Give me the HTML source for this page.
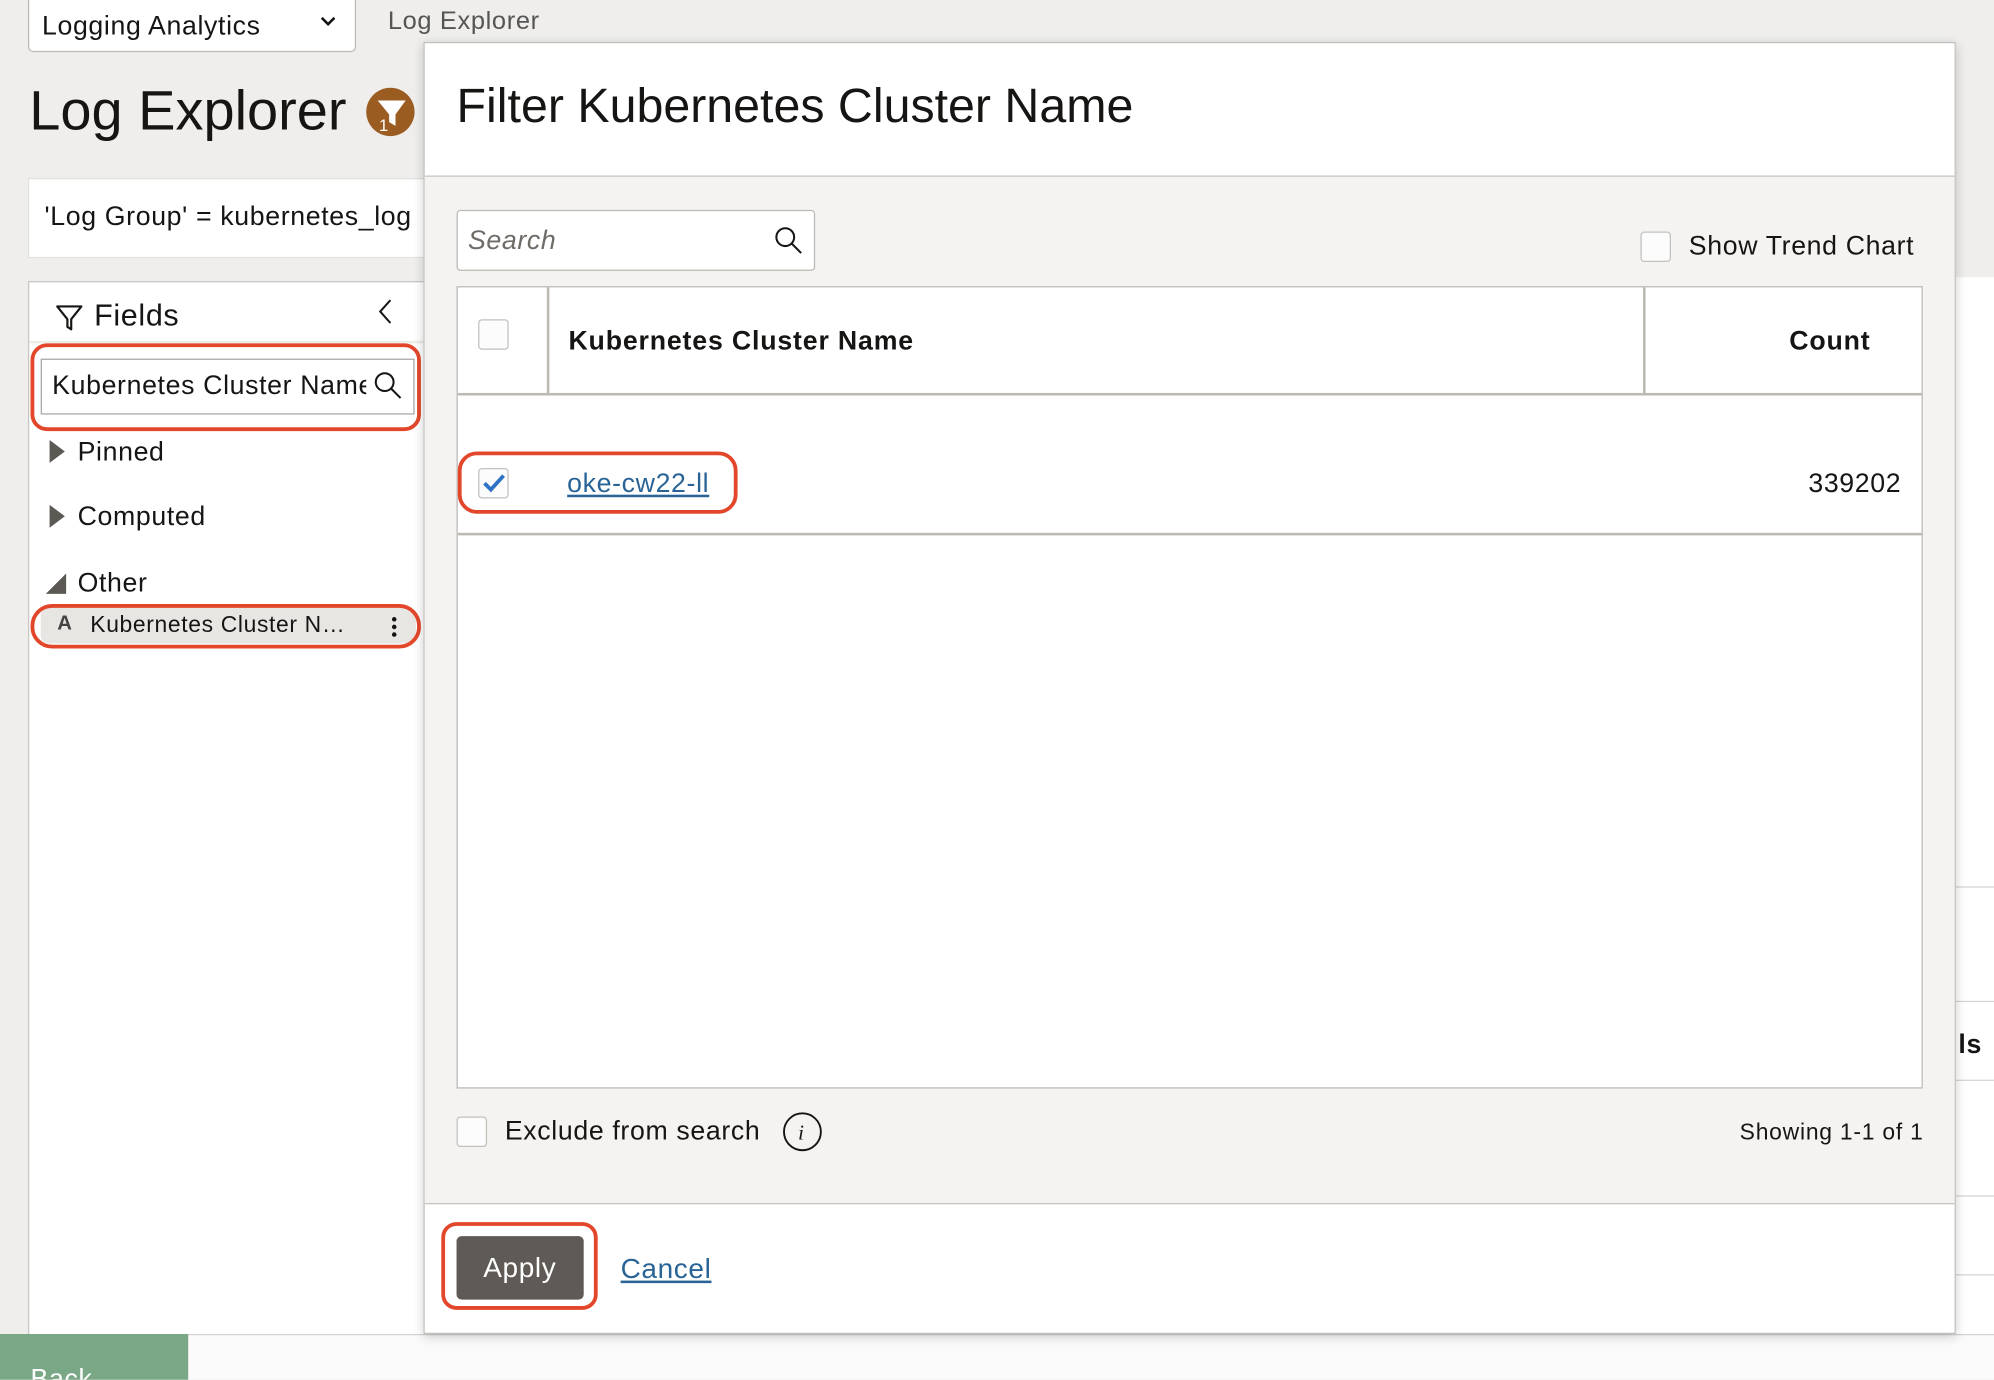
<!DOCTYPE html>
<html><head><meta charset="utf-8">
<style>
html,body{margin:0;padding:0;width:1994px;height:1374px;overflow:hidden;background:#efeeec}
#s{position:absolute;left:0;top:0;width:1568px;height:1085px;transform:scale(1.27168);transform-origin:0 0;font-family:"Liberation Sans",Arial,sans-serif;color:#161513;background:#efeeec;overflow:hidden}
.a{position:absolute}
.t{position:absolute;white-space:nowrap;line-height:1;letter-spacing:0.5px}
.red{position:absolute;border:3px solid #e2472b;box-sizing:border-box}
.cb{position:absolute;width:24px;height:24px;border:1.5px solid #c4c1bd;border-radius:3px;background:#fcfcfc;box-sizing:border-box}
</style></head><body><div id="s">
<div class="a" style="left:22px;top:-4px;width:258px;height:45px;background:#fff;border:1.5px solid #bdbab6;border-radius:4px;box-sizing:border-box"></div>
<div class="t" style="left:33px;top:10px;font-size:21px">Logging Analytics</div>
<svg class="a" style="left:251px;top:12px" width="14" height="10"><path d="M2 2 L7 7 L12 2" stroke="#161513" stroke-width="2" fill="none"/></svg>
<div class="t" style="left:305px;top:7px;font-size:20px;color:#555">Log Explorer</div>
<div class="t" style="left:23px;top:66px;font-size:44px;letter-spacing:0">Log Explorer</div>
<div class="a" style="left:288px;top:69px;width:38px;height:38px;border-radius:50%;background:#9b5c22"></div>
<svg class="a" style="left:288px;top:69px" width="38" height="38"><path d="M9 10 H31 L23 21 V30 L18 27 V21 Z" fill="#fff"/><text x="10" y="34" font-size="13" fill="#fff" font-family="Liberation Sans">1</text></svg>
<div class="a" style="left:22px;top:140px;width:320px;height:63px;background:#fff;border:1px solid #e3e1de;box-sizing:border-box"></div>
<div class="t" style="left:35px;top:160px;font-size:21px">'Log Group' = kubernetes_log</div>
<div class="a" style="left:22px;top:221px;width:320px;height:840px;background:#fff;border:1.5px solid #c8c5c1;box-sizing:border-box"></div>
<div class="a" style="left:23px;top:268px;width:310px;height:2px;background:#eeece9"></div>
<svg class="a" style="left:43px;top:238px" width="24" height="24"><path d="M2 3 H21 L13 13 V21 L10 19 V13 Z" stroke="#161513" stroke-width="1.7" fill="none" stroke-linejoin="round"/></svg>
<div class="t" style="left:74px;top:237px;font-size:24px">Fields</div>
<svg class="a" style="left:296px;top:234px" width="14" height="22"><path d="M11 2 L3 11 L11 20" stroke="#161513" stroke-width="1.6" fill="none"/></svg>
<div class="a" style="left:32px;top:282px;width:294px;height:44px;background:#fff;border:1.5px solid #aaa7a3;box-sizing:border-box"></div>
<div class="t" style="left:41px;top:293px;font-size:21px;width:247px;overflow:hidden">Kubernetes Cluster Name</div>
<svg class="a" style="left:293px;top:291px" width="24" height="24"><circle cx="9.5" cy="9.5" r="7" stroke="#161513" stroke-width="1.6" fill="none"/><path d="M14.5 14.5 L22 22" stroke="#161513" stroke-width="1.6"/></svg>
<div class="red" style="left:24px;top:270px;width:307px;height:69px;border-radius:13px"></div>
<svg class="a" style="left:37px;top:344px" width="16" height="22"><path d="M2 2 L14 11 L2 20 Z" fill="#5c5854"/></svg>
<div class="t" style="left:61px;top:345px;font-size:21px">Pinned</div>
<svg class="a" style="left:37px;top:395px" width="16" height="22"><path d="M2 2 L14 11 L2 20 Z" fill="#5c5854"/></svg>
<div class="t" style="left:61px;top:396px;font-size:21px">Computed</div>
<svg class="a" style="left:34px;top:449px" width="20" height="20"><path d="M18 2 V18 H2 Z" fill="#5c5854"/></svg>
<div class="t" style="left:61px;top:448px;font-size:21px">Other</div>
<div class="a" style="left:32px;top:478px;width:295px;height:28px;background:#e8e6e3;border-radius:6px"></div>
<div class="t" style="left:45px;top:483px;font-size:16px;font-weight:bold;color:#444">A</div>
<div class="t" style="left:71px;top:482px;font-size:18px">Kubernetes Cluster N…</div>
<svg class="a" style="left:306px;top:483px" width="8" height="20"><circle cx="4" cy="4" r="1.8" fill="#161513"/><circle cx="4" cy="10" r="1.8" fill="#161513"/><circle cx="4" cy="16" r="1.8" fill="#161513"/></svg>
<div class="red" style="left:24px;top:475px;width:307px;height:35px;border-radius:17px"></div>
<div class="a" style="left:1538px;top:218px;width:30px;height:832px;background:#fff"></div>
<div class="a" style="left:1538px;top:697px;width:30px;height:1px;background:#d8d6d3"></div>
<div class="a" style="left:1538px;top:787px;width:30px;height:1px;background:#d8d6d3"></div>
<div class="a" style="left:1538px;top:849px;width:30px;height:1px;background:#d8d6d3"></div>
<div class="a" style="left:1538px;top:940px;width:30px;height:1px;background:#d8d6d3"></div>
<div class="a" style="left:1538px;top:1002px;width:30px;height:1px;background:#d8d6d3"></div>
<div class="t" style="left:1540px;top:811px;font-size:21px;font-weight:bold">ls</div>
<div class="a" style="left:0;top:1049px;width:1568px;height:40px;background:#fafafb;border-top:1px solid #d4d4d4"></div>
<div class="a" style="left:0;top:1049px;width:148px;height:40px;background:#7aa886"></div>
<div class="t" style="left:24px;top:1074px;font-size:21px;color:#fff">Back</div>
<div class="a" style="left:333px;top:33px;width:1205px;height:1016px;background:#fff;border:1px solid #c4c1bd;box-sizing:border-box;box-shadow:0 2px 8px rgba(0,0,0,.2)"></div>
<div class="a" style="left:334px;top:138px;width:1203px;height:807px;background:#f4f3f2;border-top:1.5px solid #c8c5c1;border-bottom:1.5px solid #c8c5c1"></div>
<div class="t" style="left:359px;top:65px;font-size:38px;letter-spacing:0">Filter Kubernetes Cluster Name</div>
<div class="a" style="left:359px;top:165px;width:282px;height:48px;background:#fff;border:1.5px solid #bcb9b5;border-radius:3px;box-sizing:border-box"></div>
<div class="t" style="left:368px;top:179px;font-size:21px;font-style:italic;color:#6f6b67">Search</div>
<svg class="a" style="left:608px;top:177px" width="24" height="24"><circle cx="9.5" cy="9.5" r="7" stroke="#161513" stroke-width="1.6" fill="none"/><path d="M14.5 14.5 L22 22" stroke="#161513" stroke-width="1.6"/></svg>
<div class="cb" style="left:1290px;top:182px"></div>
<div class="t" style="left:1328px;top:183px;font-size:21px">Show Trend Chart</div>
<div class="a" style="left:359px;top:225px;width:1153px;height:631px;background:#fff;border:1.5px solid #bcb9b5;box-sizing:border-box"></div>
<div class="a" style="left:430px;top:226px;width:1.5px;height:84px;background:#bcb9b5"></div>
<div class="a" style="left:1292px;top:226px;width:1.5px;height:84px;background:#bcb9b5"></div>
<div class="a" style="left:360px;top:309px;width:1151px;height:1.5px;background:#bcb9b5"></div>
<div class="a" style="left:360px;top:419px;width:1151px;height:1.5px;background:#bcb9b5"></div>
<div class="cb" style="left:376px;top:251px"></div>
<div class="t" style="left:447px;top:258px;font-size:21px;font-weight:bold;letter-spacing:0.65px">Kubernetes Cluster Name</div>
<div class="t" style="left:1407px;top:258px;font-size:21px;font-weight:bold;letter-spacing:0.65px">Count</div>
<div class="cb" style="left:376px;top:368px"></div>
<svg class="a" style="left:376px;top:368px" width="24" height="24"><path d="M5 12 L10 17 L20 6" stroke="#2f72c4" stroke-width="3" fill="none"/></svg>
<div class="t" style="left:446px;top:370px;font-size:21px;color:#2a6496;text-decoration:underline">oke-cw22-ll</div>
<div class="t" style="left:1422px;top:370px;font-size:21px">339202</div>
<div class="red" style="left:360px;top:355px;width:220px;height:49px;border-radius:15px"></div>
<div class="cb" style="left:359px;top:878px"></div>
<div class="t" style="left:397px;top:879px;font-size:21px">Exclude from search</div>
<svg class="a" style="left:615px;top:874px" width="32" height="32"><circle cx="16" cy="16" r="14.5" stroke="#161513" stroke-width="1.5" fill="none"/><text x="12.5" y="22" font-size="17" font-style="italic" font-family="Liberation Serif" fill="#161513">i</text></svg>
<div class="t" style="left:1368px;top:881px;font-size:18px;letter-spacing:0.6px">Showing 1-1 of 1</div>
<div class="a" style="left:359px;top:972px;width:100px;height:50px;background:#5f5a55;border-radius:4px"></div>
<div class="t" style="left:380px;top:986px;font-size:22px;color:#fff">Apply</div>
<div class="red" style="left:347px;top:961px;width:123px;height:69px;border-radius:12px"></div>
<div class="t" style="left:488px;top:987px;font-size:22px;color:#2a6496;text-decoration:underline">Cancel</div>
</div></body></html>
